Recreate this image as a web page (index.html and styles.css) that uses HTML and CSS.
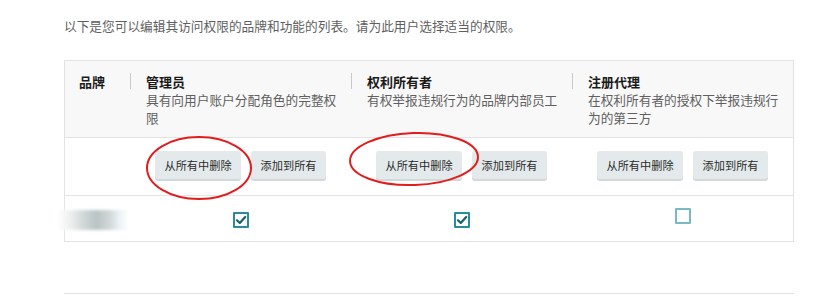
FILE: index.html
```html
<!DOCTYPE html>
<html lang="zh-CN">
<head>
<meta charset="utf-8">
<title>权限</title>
<link rel="stylesheet" href="styles.css">
</head>
<body>
<div class="page">
  <p class="intro">以下是您可以编辑其访问权限的品牌和功能的列表。请为此用户选择适当的权限。</p>
  <div class="table">
    <div class="cell head brand-head">品牌</div>
    <div class="cell head role">
      <div class="role-title">管理员</div>
      <div class="role-desc">具有向用户账户分配角色的完整权限</div>
    </div>
    <div class="cell head role">
      <div class="role-title">权利所有者</div>
      <div class="role-desc">有权举报违规行为的品牌内部员工</div>
    </div>
    <div class="cell head role">
      <div class="role-title">注册代理</div>
      <div class="role-desc">在权利所有者的授权下举报违规行为的第三方</div>
    </div>

    <div class="cell actions-blank"></div>
    <div class="cell actions"><button class="btn">从所有中删除</button><button class="btn">添加到所有</button></div>
    <div class="cell actions"><button class="btn">从所有中删除</button><button class="btn">添加到所有</button></div>
    <div class="cell actions"><button class="btn">从所有中删除</button><button class="btn">添加到所有</button></div>

    <div class="cell data brand-name"><span class="blurred"></span></div>
    <div class="cell data check-cell"><span class="checkbox checked"><svg viewBox="0 0 12 12" width="12" height="12"><path d="M2 6.3 L4.8 9 L10.2 3" fill="none" stroke="#17606c" stroke-width="2.2" stroke-linecap="round" stroke-linejoin="round"/></svg></span></div>
    <div class="cell data check-cell"><span class="checkbox checked"><svg viewBox="0 0 12 12" width="12" height="12"><path d="M2 6.3 L4.8 9 L10.2 3" fill="none" stroke="#17606c" stroke-width="2.2" stroke-linecap="round" stroke-linejoin="round"/></svg></span></div>
    <div class="cell data check-cell"><span class="checkbox unchecked"></span></div>
  </div>
  <div class="bottom-rule"></div>
</div>
<svg class="annotations" width="840" height="301" viewBox="0 0 840 301">
  <ellipse cx="199" cy="168" rx="52" ry="31" fill="none" stroke="#e21d1d" stroke-width="2"/>
  <ellipse cx="414" cy="159" rx="64" ry="26" fill="none" stroke="#e21d1d" stroke-width="2" transform="rotate(-2 414 159)"/>
</svg>
</body>
</html>
```

FILE: styles.css
```css
html, body {
  margin: 0;
  padding: 0;
  background: #ffffff;
}

body {
  font-family: "Noto Sans CJK SC", "Noto Sans", "Liberation Sans", sans-serif;
  font-size: 13px;
  line-height: 18px;
  color: #333;
  position: relative;
  width: 840px;
  height: 301px;
  overflow: hidden;
}

.page {
  padding: 17px 0 0 64px;
}

.intro {
  margin: 0;
  color: #5f5f5f;
  font-size: 12.7px;
  line-height: 18px;
}

.table {
  margin-top: 25px;
  width: 730px;
  box-sizing: border-box;
  border: 1px solid #e3e3e3;
  display: grid;
  grid-template-columns: 65px 1fr 1fr 1fr;
}

.cell {
  box-sizing: border-box;
}

.head {
  background: #f8f8f8;
  padding: 12px 8px 10px 16px;
  border-bottom: 1px solid #e3e3e3;
  height: 77px;
}

.brand-head {
  padding-left: 14px;
  font-weight: bold;
  color: #1a1a1a;
}

.role {
  position: relative;
}

.role::before {
  content: "";
  position: absolute;
  left: 0;
  top: 12px;
  width: 1px;
  height: 16px;
  background: #c9c9c9;
}

.role-title {
  font-weight: bold;
  color: #1a1a1a;
}

.role-desc {
  color: #5f5f5f;
  font-size: 12.7px;
}

.actions-blank,
.actions {
  height: 58px;
  border-bottom: 1px solid #e3e3e3;
}

.actions {
  display: flex;
  justify-content: center;
  align-items: flex-start;
  gap: 10px;
  padding-top: 13px;
}

.btn {
  font-family: "Noto Sans CJK SC", "Noto Sans", sans-serif;
  font-size: 11.2px;
  line-height: 16px;
  color: #2a2a2a;
  background: #e4eaeb;
  border: none;
  border-radius: 3px;
  box-shadow: 0 2px 0 #d2d9da;
  height: 28px;
  padding: 0 9.5px;
  cursor: pointer;
}

.data {
  height: 45px;
  display: flex;
  align-items: center;
}

.check-cell {
  justify-content: center;
}

.brand-name {
  padding-left: 0;
}

.blurred {
  display: block;
  margin-left: -8px;
  width: 72px;
  height: 20px;
  margin-top: 2px;
  background: linear-gradient(90deg, #ffffff 0%, #eef0f0 18%, #cfd6d6 38%, #b9c4c4 55%, #d0d6d6 72%, #eef4f8 88%, #ffffff 100%);
  filter: blur(1.5px);
}

.checkbox {
  box-sizing: border-box;
  width: 16px;
  height: 16px;
  border: 2px solid #2a8c99;
  border-radius: 1px;
  display: flex;
  align-items: center;
  justify-content: center;
  background: #fff;
}

.checkbox.checked {
  margin-top: 3px;
}

.checkbox.unchecked {
  border-color: #78bac3;
  margin-top: -5px;
}

.bottom-rule {
  margin-top: 51px;
  width: 730px;
  height: 1px;
  background: #e3e3e3;
}

.annotations {
  position: absolute;
  left: 0;
  top: 0;
  pointer-events: none;
}
```
